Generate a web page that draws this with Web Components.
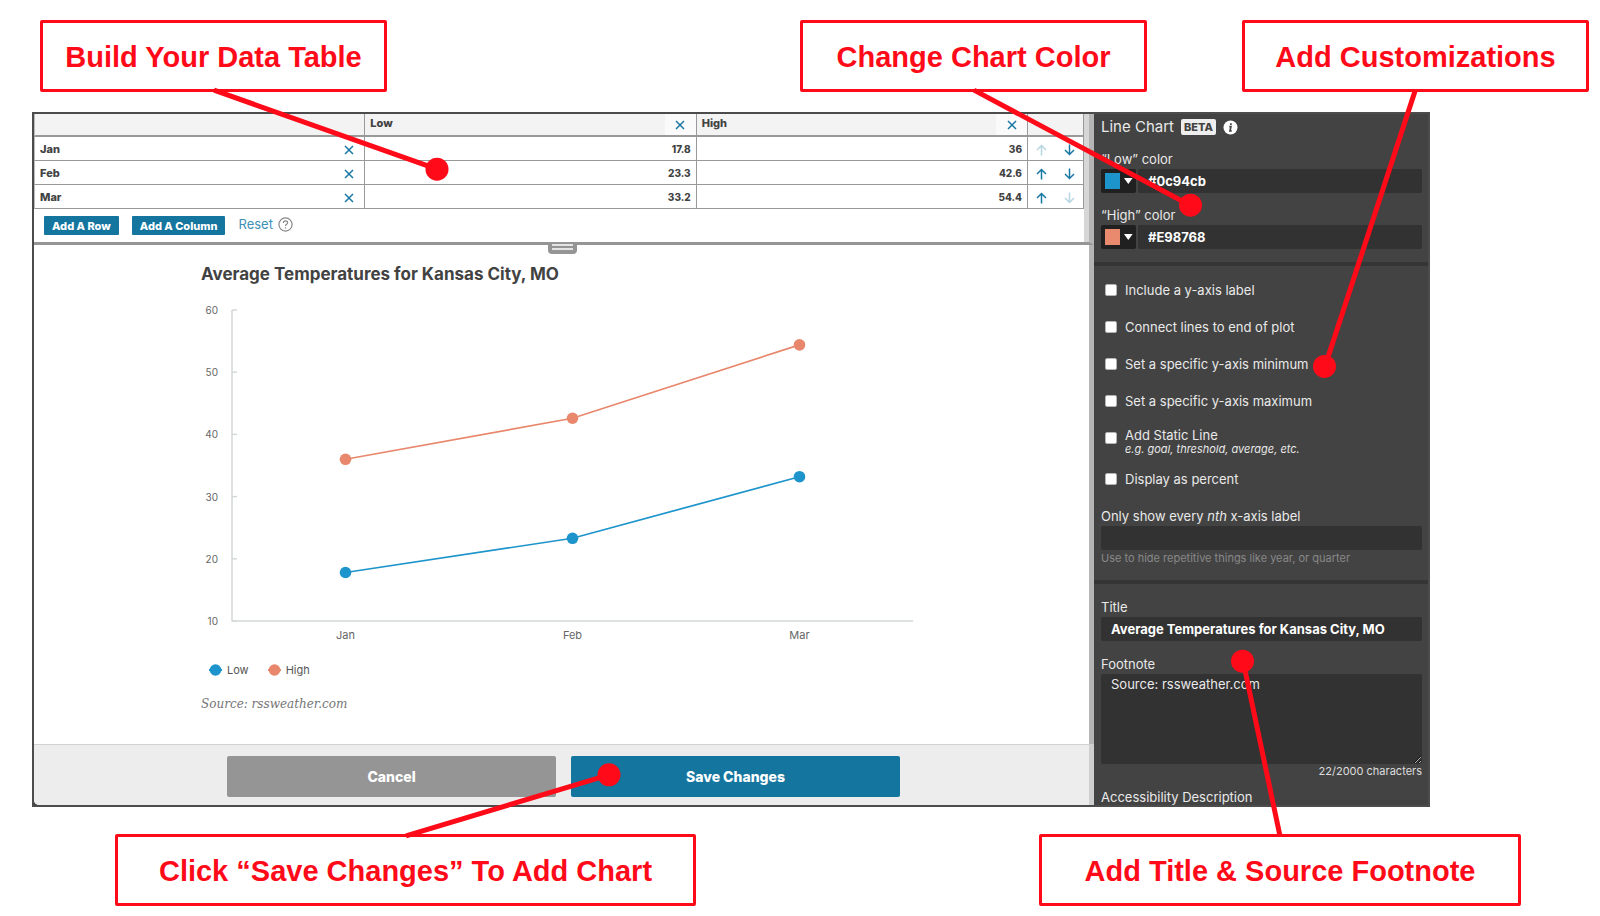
<!DOCTYPE html>
<html lang="en">
<head>
<meta charset="utf-8">
<title>Line Chart editor guide</title>
<style>
  body { margin: 0; background: #fff; font-family: Inter, "Open Sans", sans-serif; color: #424242; }
</style>
</head>
<body>
<editor-guide></editor-guide>

<template id="editor-guide">
  <style>
    :host { display: block; position: relative; padding-bottom: 11px; }
    .top { display: grid; grid-template-columns: 347fr 413fr 347fr 95fr 347fr; padding: 20px 11px 0 40px; }
    .top call-out:nth-child(2) { grid-column: 3; }
    .top call-out:nth-child(3) { grid-column: 5; }
    chart-editor { margin: 20px 170px 27px 32px; }
    .bottom { display: grid; grid-template-columns: 581fr 343fr 482fr; padding: 0 79px 0 115px; }
    .bottom call-out:nth-child(2) { grid-column: 3; }
    .pointers { position: absolute; inset: 0; width: 100%; height: 100%; pointer-events: none; }
  </style>
  <div class="top">
    <call-out>Build Your Data Table</call-out>
    <call-out>Change Chart Color</call-out>
    <call-out>Add Customizations</call-out>
  </div>
  <chart-editor></chart-editor>
  <div class="bottom">
    <call-out>Click “Save Changes” To Add Chart</call-out>
    <call-out>Add Title &amp; Source Footnote</call-out>
  </div>
  <svg class="pointers" viewBox="0 0 1600 916" preserveAspectRatio="none" aria-hidden="true">
    <g stroke="#ff0a18" stroke-width="5">
      <path d="M214 90 437 169M974 90 1190 205M1415 91 1325 366M1280 835 1243 660M406 835 609 774"/>
    </g>
    <g fill="#ff0a18">
      <circle cx="437" cy="169" r="11.5"/><circle cx="1190.500" cy="205" r="11.5"/>
      <circle cx="1324.500" cy="366" r="11.5"/><circle cx="1242.500" cy="660.500" r="11.5"/>
      <circle cx="609" cy="774" r="11.5"/>
    </g>
  </svg>
</template>

<template id="call-out">
  <style>
    :host { display: flex; align-items: center; justify-content: center; box-sizing: border-box; height: 72px; padding-top: 2px;
      border: 3px solid #ff0a18; border-radius: 2px; background: #fff; color: #ff0a18;
      font: bold 29px/32px "Liberation Sans", Arial, sans-serif; white-space: nowrap; }
  </style>
  <span><slot></slot></span>
</template>

<template id="chart-editor">
  <style>
    :host { display: grid; grid-template-columns: minmax(0, 1fr) 334px; border: 2px solid #4c4c4c; background: #434343; overflow: hidden; }
    .work { display: flex; flex-direction: column; background: #fff; border-bottom-left-radius: 5px; overflow: hidden; }
    line-chart { flex: 1; }
  </style>
  <div class="work">
    <data-table></data-table>
    <line-chart></line-chart>
    <action-bar></action-bar>
  </div>
  <settings-panel></settings-panel>
</template>

<template id="data-table">
  <style>
    :host { display: block; position: relative; border-bottom: 3px solid #959595; border-right: 5px solid #b5b5b5; }
    .pane { border-right: 5px solid #d6d6d6; }
    table { width: 100%; table-layout: fixed; border-collapse: separate; border-spacing: 0; font-size: 11px; font-weight: 800; line-height: 14px; }
    th, td { box-sizing: border-box; height: 24px; padding: 0 5px; border-right: 1px solid #999; border-bottom: 1px solid #999; text-align: right; font-weight: 800; }
    td { font-size: 10px; }
    th { text-align: left; }
    tr > :first-child { border-left: 1px solid #bbb; }
    thead th, thead td { height: 23px; background: #f3f3f3; border-bottom-width: 2px; padding-bottom: 4px; }
    thead th { padding-right: 0; padding-bottom: 0; }
    .cell { display: flex; align-items: center; justify-content: space-between; }
    thead .cell { height: 21px; }
    thead .cell span { padding-bottom: 4px; }
    button { display: inline-flex; align-items: center; justify-content: center; width: 31px; height: 20px; padding: 2px 0 0; border: 0; background: none; color: #1878a3; }
    thead button { height: 21px; padding: 0; background: #fafafa; }
    tbody th { padding-right: 0; }
    .moves { padding: 0; }
    .moves div { display: flex; }
    .moves button { width: 28px; }
    button:disabled { opacity: .3; }
    svg { fill: none; stroke: currentColor; stroke-width: 1.5; }
    .tools { display: flex; align-items: center; padding: 7px 10px; }
    .tools button { width: auto; height: 19px; padding: 0 8px; margin-right: 13px; border-radius: 1px; background: #14759f; color: #fff; font: 800 11px/14px Inter, sans-serif; }
    a, .help { margin-bottom: 3px; }
    a { color: #3d8fb4; font-size: 13px; line-height: 16px; text-decoration: none; margin-right: 5px; }
    .help { color: #888; stroke-width: 1.2; }
    .grip { position: absolute; left: 50%; top: 100%; width: 29px; height: 12px; margin-left: -14px; box-sizing: border-box; padding: 0 4px; background: #959595; border-radius: 0 0 4px 4px; }
    .grip i { display: block; height: 2px; margin-top: 2px; background: #e4e4e4; }
  </style>
  <div class="pane">
    <table>
      <colgroup><col><col><col><col style="width:56px"></colgroup>
      <thead></thead>
      <tbody></tbody>
    </table>
    <div class="tools">
      <button type="button">Add A Row</button>
      <button type="button">Add A Column</button>
      <a href="#reset">Reset</a>
      <svg class="help" width="15" height="15" viewBox="0 0 15 15" role="img" aria-label="Help"><circle cx="7.500" cy="7.500" r="6.600"/><path d="M5.400 6C5.400 3 9.700 3.200 9.600 5.700 9.500 7.200 7.500 7.200 7.500 9M7.500 10.200V11.500"/></svg>
    </div>
  </div>
  <div class="grip"><i></i><i></i></div>
</template>

<template id="line-chart">
  <style>
    :host { display: block; padding: 19px 167px 30px; border-right: 5px solid #b5b5b5; }
    h2 { margin: 0; font-size: 17px; line-height: 20px; font-weight: 700; color: #424242; }
    svg { display: block; width: 100%; }
    .axis { stroke: #d4d8d9; stroke-width: 1.5; fill: none; }
    text { font-size: 11px; fill: #666; }
    .tick { font-size: 10px; }
    ul { display: flex; gap: 19px; margin: 8px 0 0; padding: 0 0 0 8px; list-style: none; font-size: 11px; line-height: 20px; color: #555; }
    li { display: flex; align-items: center; gap: 5px; }
    li svg { width: 13px; }
    p { margin: 14px 0 0; font: italic 12px/20px "DejaVu Serif", serif; color: #757575; }
  </style>
  <h2>Average Temperatures for Kansas City, MO</h2>
  <svg class="plot" viewBox="0 0 721 368" role="img" aria-label="Low and high temperatures, January to March"></svg>
  <ul></ul>
  <p>Source: rssweather.com</p>
</template>

<template id="action-bar">
  <style>
    :host { display: flex; gap: 15px; padding: 11px 189px 8px 193px; background: #ededed; border-top: 1px solid #d2d2d2; border-right: 5px solid #cfcfcf; }
    button { flex: 1; height: 41px; padding: 0; border: 0; border-radius: 2px; background: #959595; color: #fff; font: 800 14px/20px Inter, sans-serif; }
    .save { background: #14759f; }
  </style>
  <button type="button">Cancel</button>
  <button type="button" class="save">Save Changes</button>
</template>

<template id="settings-panel">
  <style>
    :host { display: block; min-width: 0; overflow: hidden; background: #434343; color: #e9e9e9; font-size: 12px; line-height: 16px; }
    section { padding: 15px 6px 13px 7px; border-bottom: 4px solid #353535; }
    section:first-of-type { padding-top: 4px; }
    section:last-of-type { border: 0; padding-bottom: 0; }
    section.options { padding: 6px 6px 15px 7px; }
    header { display: flex; align-items: center; height: 18px; margin-bottom: 15px; }
    h1 { margin: 0 7px 0 0; font-size: 15px; line-height: 18px; font-weight: 400; }
    .badge { padding: 0 3px; border-radius: 2px; background: #eee; color: #434343; font-size: 11px; line-height: 16px; font-weight: 800; margin-right: 7px; }
    label { display: block; margin-bottom: 2px; font-size: 13px; }
    input, textarea { display: block; box-sizing: border-box; width: 100%; border: 0; border-radius: 2px; margin: 0; padding: 0 10px; background: #323232; color: #fff; font: 700 13px/16px Inter, sans-serif; }
    input { height: 24px; }
    textarea { height: 90px; padding-top: 2px; font-weight: 400; color: #e9e9e9; resize: vertical; }
    .nth { margin-top: 10px; }
    small { display: block; margin-top: 1px; font-size: 11px; line-height: 14px; color: #888; }
    .count { margin: 0; text-align: right; color: #ddd; }
    color-field + color-field { margin-top: 14px; }
    .foot { margin-top: 15px; }
    .next { line-height: 15px; margin: 12px 0 0; }
  </style>
  <section>
    <header>
      <h1>Line Chart</h1><span class="badge">BETA</span>
      <svg width="15" height="15" viewBox="0 0 15 15" role="img" aria-label="Info"><circle cx="7.500" cy="7.500" r="7" fill="#fff"/><path d="M7.900 3.200V5M6.300 6.700H7.900L7 10.800H8.700" fill="none" stroke="#434343" stroke-width="1.700"/></svg>
    </header>
    <color-field label="“Low” color" value="#0c94cb" swatch="#1d94cb"></color-field>
    <color-field label="“High” color" value="#E98768" swatch="#e98a6e"></color-field>
  </section>
  <section class="options">
    <check-option>Include a y-axis label</check-option>
    <check-option>Connect lines to end of plot</check-option>
    <check-option>Set a specific y-axis minimum</check-option>
    <check-option>Set a specific y-axis maximum</check-option>
    <check-option note="e.g. goal, threshold, average, etc.">Add Static Line</check-option>
    <check-option>Display as percent</check-option>
    <label class="nth" for="nth">Only show every <em>nth</em> x-axis label</label>
    <input id="nth" type="text">
    <small>Use to hide repetitive things like year, or quarter</small>
  </section>
  <section>
    <label for="title">Title</label>
    <input id="title" type="text" value="Average Temperatures for Kansas City, MO">
    <label class="foot" for="footnote">Footnote</label>
    <textarea id="footnote">Source: rssweather.com</textarea>
    <small class="count">22/2000 characters</small>
    <label class="next">Accessibility Description</label>
  </section>
</template>

<template id="color-field">
  <style>
    :host { display: block; }
    label { display: block; margin-bottom: 2px; font-size: 13px; line-height: 16px; }
    div { display: flex; gap: 2px; }
    button { display: flex; align-items: center; gap: 4px; width: 35px; height: 24px; padding: 0 3px 0 4px; border: 0; border-radius: 2px; background: #202020; }
    i { width: 16px; height: 16px; background: var(--swatch); }
    input { flex: 1; min-width: 0; height: 24px; box-sizing: border-box; border: 0; border-radius: 2px; padding: 0 10px; background: #323232; color: #fff; font: 700 13px/16px Inter, sans-serif; }
  </style>
  <label for="value"></label>
  <div>
    <button type="button" aria-label="Pick a color"><i></i><svg width="9" height="6" viewBox="0 0 9 6"><path d="M0 0H9L4.500 6Z" fill="#fff"/></svg></button>
    <input id="value" type="text">
  </div>
</template>

<template id="check-option">
  <style>
    :host { display: block; }
    label { display: flex; align-items: flex-start; gap: 8px; height: 37px; box-sizing: border-box; padding: 0 4px; font-size: 13px; line-height: 16px; }
    input { appearance: none; width: 12px; height: 12px; margin: 12px 0 0; flex: none; border: 1px solid #b5b5b5; border-radius: 2px; background: #fff; }
    input:checked { background: #14759f; }
    .text { padding-top: 10px; }
    .note { display: none; font-size: 11px; line-height: 12px; font-style: italic; }
    :host([note]) label { height: 41px; }
    :host([note]) .text { padding-top: 7px; }
    :host([note]) .note { display: block; }
  </style>
  <label><input type="checkbox"><span class="text"><slot></slot><span class="note"></span></span></label>
</template>

<script>
  const months = ['Jan', 'Feb', 'Mar'];
  const series = [
    { name: 'Low', color: '#1d94cb', values: [17.8, 23.3, 33.2] },
    { name: 'High', color: '#e9876c', values: [36, 42.6, 54.4] }
  ];

  class TemplateElement extends HTMLElement {
    constructor() {
      super();
      const template = document.getElementById(this.localName);
      this.attachShadow({ mode: 'open' }).append(template.content.cloneNode(true));
    }
    $(selector) { return this.shadowRoot.querySelector(selector); }
  }

  class DataTable extends TemplateElement {
    connectedCallback() {
      const remove = name => `<button type="button" aria-label="Remove ${name}"><svg width="10" height="10" viewBox="0 0 10 10"><path d="M1 1 9 9M9 1 1 9"/></svg></button>`;
      const move = (label, path, off) => `<button type="button" aria-label="${label}"${off ? ' disabled' : ''}><svg width="11" height="12" viewBox="0 0 11 12"><path d="${path}"/></svg></button>`;
      this.$('thead').innerHTML = '<tr><td></td>' +
        series.map(s => `<th scope="col"><div class="cell"><span>${s.name}</span>${remove(s.name)}</div></th>`).join('') + '<td></td></tr>';
      this.$('tbody').innerHTML = months.map((m, i) =>
        `<tr><th scope="row"><div class="cell"><span>${m}</span>${remove(m)}</div></th>` +
        series.map(s => `<td>${s.values[i]}</td>`).join('') +
        `<td class="moves"><div>${move('Move up', 'M5.500 11.500V1.500M1 6 5.500 1.500 10 6', i === 0)}` +
        `${move('Move down', 'M5.500 .5V10.500M1 6 5.500 10.500 10 6', i === months.length - 1)}</div></td></tr>`).join('');
    }
  }

  class LineChart extends TemplateElement {
    connectedCallback() {
      const left = 31, right = 712, top = 26, bottom = 337;
      const y = v => bottom - (v - 10) * (bottom - top) / 50;
      const x = i => left + (right - left) * (i + .5) / months.length;
      let out = `<path class="axis" d="M${left} ${top}V${bottom}H${right}"/>`;
      for (let v = 10; v <= 60; v += 10) {
        out += `<path class="axis" d="M${left} ${y(v)}h5"/><text class="tick" x="17" y="${y(v) + 4}" text-anchor="end">${v}</text>`;
      }
      months.forEach((m, i) => { out += `<text x="${x(i)}" y="355" text-anchor="middle">${m}</text>`; });
      series.forEach(s => {
        const points = s.values.map((v, i) => [x(i), y(v)]);
        out += `<polyline points="${points.join(' ')}" fill="none" stroke="${s.color}" stroke-width="1.7"/>`;
        points.forEach(([px, py]) => { out += `<circle cx="${px}" cy="${py}" r="5.8" fill="${s.color}"/>`; });
      });
      this.$('.plot').innerHTML = out;
      this.$('ul').innerHTML = series.map(s =>
        `<li><svg width="13" height="12" viewBox="0 0 13 12"><path d="M0 6H13" stroke="${s.color}" stroke-width="2"/><circle cx="6.500" cy="6" r="5.800" fill="${s.color}"/></svg>${s.name}</li>`).join('');
    }
  }

  class ColorField extends TemplateElement {
    connectedCallback() {
      this.$('label').textContent = this.getAttribute('label');
      this.$('input').value = this.getAttribute('value');
      this.$('i').style.setProperty('--swatch', this.getAttribute('swatch'));
    }
  }

  class CheckOption extends TemplateElement {
    connectedCallback() { this.$('.note').textContent = this.getAttribute('note') || ''; }
  }

  customElements.define('call-out', class extends TemplateElement {});
  customElements.define('data-table', DataTable);
  customElements.define('line-chart', LineChart);
  customElements.define('action-bar', class extends TemplateElement {});
  customElements.define('color-field', ColorField);
  customElements.define('check-option', CheckOption);
  customElements.define('settings-panel', class extends TemplateElement {});
  customElements.define('chart-editor', class extends TemplateElement {});
  customElements.define('editor-guide', class extends TemplateElement {});
</script>
</body>
</html>
